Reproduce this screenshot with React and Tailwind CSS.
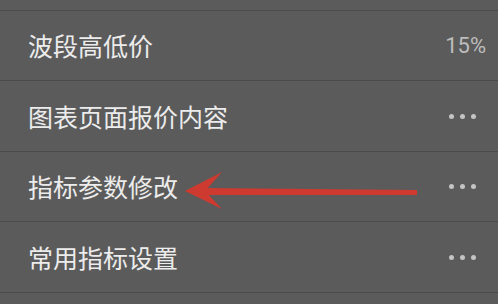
import React from "react";

const rows = [
  { label: "波段高低价", value: "15%", h: "h-[69px]" },
  { label: "图表页面报价内容", dots: true, h: "h-[70px]" },
  { label: "指标参数修改", dots: true, h: "h-[69px]", arrow: true },
  { label: "常用指标设置", dots: true, h: "h-[70px]" },
];

function Dots() {
  return (
    <div className="flex items-center gap-[6px] mr-[2px]">
      <span className="w-[5px] h-[5px] rounded-full bg-[#c4c4c4]" />
      <span className="w-[5px] h-[5px] rounded-full bg-[#c4c4c4]" />
      <span className="w-[5px] h-[5px] rounded-full bg-[#c4c4c4]" />
    </div>
  );
}

export default function App() {
  return (
    <div
      className="w-[498px] h-[304px] overflow-hidden bg-[#5b5b5b] relative"
      style={{ fontFamily: '"Noto Sans CJK SC", "Noto Sans", Roboto, sans-serif' }}
    >
      <div className="h-[11px] border-b border-[#4b4b4b]" />
      {rows.map((r) => (
        <div
          key={r.label}
          className={`${r.h} box-content border-b border-[#4b4b4b] flex items-center justify-between pl-[28px] pr-[20px] relative`}
        >
          <span className="text-[25px] leading-none text-[#ececec]">{r.label}</span>
          {r.value && (
            <span className="text-[22px] leading-none text-[#bdbdbd] mr-[-8px]" style={{ fontFamily: "Roboto, sans-serif" }}>
              {r.value}
            </span>
          )}
          {r.dots && <Dots />}
          {r.arrow && (
            <svg className="absolute left-[180px] top-[16px]" width="242" height="44" viewBox="0 0 242 44">
              <path d="M22 20 L237 22 L237 27 L22 27 Z" fill="#cf3a30" />
              <path d="M5 23 L42 4 L25 23 L42 41 Z" fill="#cf3a30" />
            </svg>
          )}
        </div>
      ))}
    </div>
  );
}
